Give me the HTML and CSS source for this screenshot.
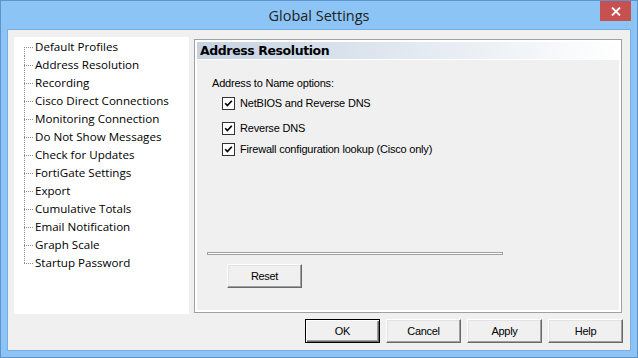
FILE: index.html
```html
<!DOCTYPE html>
<html>
<head>
<meta charset="utf-8">
<link rel="stylesheet" href="styles.css">
</head>
<body>
<div class="window">
  <div class="titlebar">
    <div></div>
    <div class="title">Global Settings</div>
    <div class="close">
      <svg width="10" height="9" viewBox="0 0 10 9"><path d="M1 0.5 L9 8.5 M9 0.5 L1 8.5" stroke="#fff" stroke-width="1.8"/></svg>
    </div>
  </div>
  <div class="client">
    <div class="main">
      <ul class="tree">
        <li>Default Profiles</li>
        <li class="sel">Address Resolution</li>
        <li>Recording</li>
        <li>Cisco Direct Connections</li>
        <li>Monitoring Connection</li>
        <li>Do Not Show Messages</li>
        <li>Check for Updates</li>
        <li>FortiGate Settings</li>
        <li>Export</li>
        <li>Cumulative Totals</li>
        <li>Email Notification</li>
        <li>Graph Scale</li>
        <li>Startup Password</li>
      </ul>
      <div class="panel">
        <div class="panel-head">Address Resolution</div>
        <div class="panel-body">
          <div class="group-label">Address to Name options:</div>
          <div class="cb-row r1"><span class="cb"><svg width="11" height="11" viewBox="0 0 11 11"><path d="M2.2 5.2 L4.4 7.6 L8.8 2.8" fill="none" stroke="#000" stroke-width="1.7"/></svg></span><span>NetBIOS and Reverse DNS</span></div>
          <div class="cb-row r2"><span class="cb"><svg width="11" height="11" viewBox="0 0 11 11"><path d="M2.2 5.2 L4.4 7.6 L8.8 2.8" fill="none" stroke="#000" stroke-width="1.7"/></svg></span><span>Reverse DNS</span></div>
          <div class="cb-row r3"><span class="cb"><svg width="11" height="11" viewBox="0 0 11 11"><path d="M2.2 5.2 L4.4 7.6 L8.8 2.8" fill="none" stroke="#000" stroke-width="1.7"/></svg></span><span>Firewall configuration lookup (Cisco only)</span></div>
          <div class="separator"></div>
          <button class="btn reset">Reset</button>
        </div>
      </div>
    </div>
    <div class="buttons">
      <button class="btn default">OK</button>
      <button class="btn">Cancel</button>
      <button class="btn">Apply</button>
      <button class="btn">Help</button>
    </div>
  </div>
</div>
</body>
</html>
```
FILE: styles.css
```css
html, body {
  margin: 0;
  padding: 0;
}
body {
  width: 638px;
  height: 358px;
  overflow: hidden;
}
.window {
  box-sizing: border-box;
  width: 638px;
  height: 358px;
  background: #8cc4f6;
  border: 1px solid #5f93cc;
  display: flex;
  flex-direction: column;
}
.titlebar {
  height: 29px;
  display: grid;
  grid-template-columns: 1fr auto 1fr;
}
.title {
  font-family: "Open Sans", sans-serif;
  font-size: 14.5px;
  color: #222;
  line-height: 29px;
}
.close {
  justify-self: end;
  align-self: start;
  margin-right: 6px;
  width: 31px;
  height: 20px;
  background: #c75050;
  display: flex;
  align-items: center;
  justify-content: center;
}
.client {
  flex: 1;
  margin: 0 7px 7px 7px;
  background: #f0f0f0;
  box-shadow: 0 0 0 1px #7aaee0;
  display: flex;
  flex-direction: column;
}
.main {
  display: flex;
  align-items: flex-start;
  padding: 7px 0 0 6px;
}
.tree {
  list-style: none;
  margin: 0;
  padding: 1px 0 0 0;
  width: 175px;
  height: 277px;
  box-sizing: border-box;
  background: #fff;
  font-family: "Open Sans", sans-serif;
  font-size: 11.6px;
  color: #000;
}
.tree li {
  height: 18px;
  line-height: 18px;
  padding-left: 21px;
  white-space: nowrap;
  background-image:
    repeating-linear-gradient(to bottom, #8a8a8a 0 1px, transparent 1px 2px),
    repeating-linear-gradient(to right, #8a8a8a 0 1px, transparent 1px 2px);
  background-repeat: no-repeat;
  background-size: 1px 18px, 9px 1px;
  background-position: 10px 0, 10px 9px;
}
.tree li:first-child {
  background-size: 1px 10px, 9px 1px;
  background-position: 10px 9px, 10px 9px;
}
.tree li:last-child {
  background-size: 1px 10px, 9px 1px;
  background-position: 10px 0, 10px 9px;
}
.panel {
  margin: 2px 0 0 5px;
  width: 428px;
  height: 274px;
  box-sizing: border-box;
  border: 1px solid #a0a0a0;
  background: #fff;
  padding: 2px;
  display: flex;
  flex-direction: column;
}
.panel-head {
  height: 17px;
  line-height: 17px;
  padding-left: 3px;
  margin-bottom: 1px;
  background: linear-gradient(to right, #c5d2e2, #ffffff);
  font-family: "DejaVu Sans", sans-serif;
  font-weight: bold;
  font-size: 12.5px;
  letter-spacing: -0.4px;
  color: #000;
}
.panel-body {
  flex: 1;
  background: #f0f0f0;
  display: flex;
  flex-direction: column;
  align-items: flex-start;
  font-family: "Liberation Sans", Arial, sans-serif;
  font-size: 11px;
  letter-spacing: -0.2px;
  color: #000;
}
.group-label {
  margin: 16px 0 0 15px;
  line-height: 14px;
}
.cb-row {
  display: flex;
  align-items: center;
  height: 13px;
  margin-left: 25px;
  gap: 5px;
  line-height: 13px;
}
.cb-row.r1 { margin-top: 7px; }
.cb-row.r2 { margin-top: 12px; }
.cb-row.r3 { margin-top: 8px; }
.cb {
  box-sizing: border-box;
  width: 13px;
  height: 13px;
  border: 1px solid #333;
  background: #fff;
  display: flex;
  align-items: center;
  justify-content: center;
}
.separator {
  margin: 96px 0 0 10px;
  width: 294px;
  height: 1px;
  border: 1px solid #a0a0a0;
  background: #fff;
}
.btn {
  box-sizing: border-box;
  width: 75px;
  height: 24px;
  padding: 0;
  margin: 0;
  background: #f0f0f0;
  border: 1px solid;
  border-color: #fff #696969 #696969 #fff;
  box-shadow: inset -1px -1px #a0a0a0, inset 1px 1px #e3e3e3;
  font-family: "Liberation Sans", Arial, sans-serif;
  font-size: 11px;
  letter-spacing: -0.3px;
  color: #000;
}
.btn.reset {
  margin: 9px 0 0 30px;
}
.btn.default {
  border: 1px solid #000;
  box-shadow: inset 1px 1px #fff, inset -1px -1px #696969, inset -2px -2px #a0a0a0;
}
.buttons {
  margin-top: auto;
  display: flex;
  justify-content: flex-end;
  gap: 6px;
  padding: 0 7px 7px 0;
}
```
